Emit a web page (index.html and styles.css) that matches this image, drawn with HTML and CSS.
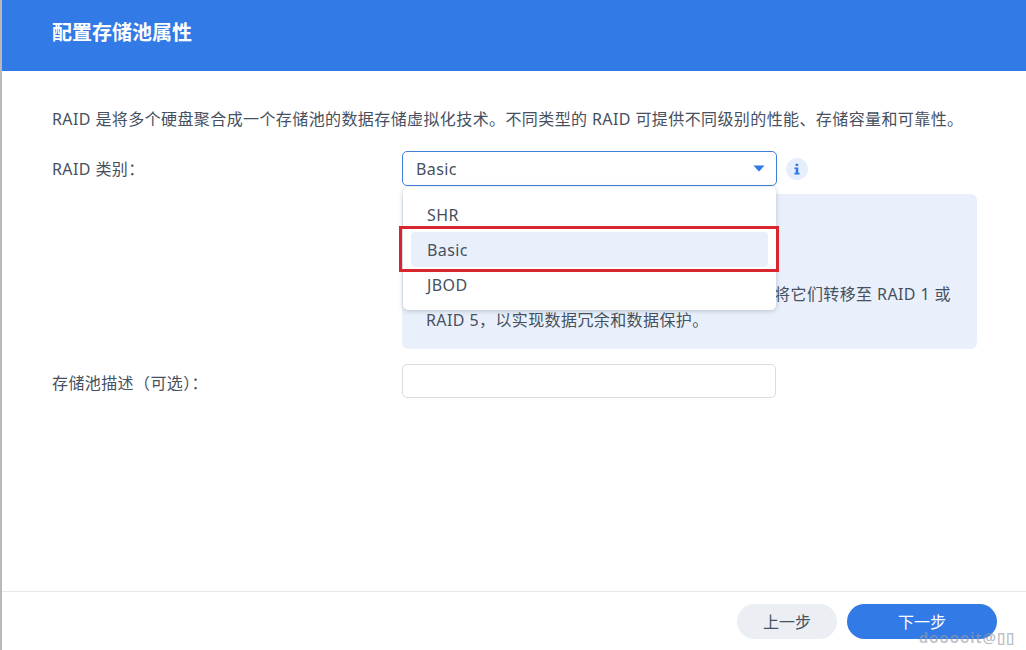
FILE: index.html
```html
<!DOCTYPE html>
<html lang="zh-CN">
<head>
<meta charset="utf-8">
<title>配置存储池属性</title>
<link rel="stylesheet" href="styles.css">
</head>
<body>
<div class="dialog">
  <header class="head"><h1>配置存储池属性</h1></header>
  <main class="content">
    <p class="intro">RAID 是将多个硬盘聚合成一个存储池的数据存储虚拟化技术。不同类型的 RAID 可提供不同级别的性能、存储容量和可靠性。</p>
    <div class="row raid-row">
      <label class="label">RAID 类别：</label>
      <div class="field">
        <div class="select-line">
          <div class="select">
            <span>Basic</span>
            <svg class="caret" width="12" height="7" viewBox="0 0 12 7"><path d="M0.5 0.5h11L6.6 6a.8.8 0 0 1-1.2 0z" fill="#3179e6"/></svg>
          </div>
          <span class="info">
            <svg width="10" height="12" viewBox="0 0 10 12"><path d="M3.6 0.8h2.6v2.2H3.6zM2.4 4.4h3.9v5.4h1.3v1.6H2.4V9.8h1.3V6H2.4z" fill="#3179e6"/></svg>
          </span>
        </div>
        <div class="notice">
          <div class="notice-end">将它们转移至 RAID 1 或</div>
          <div>RAID 5，以实现数据冗余和数据保护。</div>
        </div>
        <ul class="menu">
          <li class="opt">SHR</li>
          <li class="opt active">Basic</li>
          <li class="opt">JBOD</li>
        </ul>
        <div class="mark"></div>
      </div>
    </div>
    <div class="row desc-row">
      <label class="label">存储池描述（可选）：</label>
      <div class="input"></div>
    </div>
  </main>
  <footer class="foot">
    <button class="btn prev">上一步</button>
    <button class="btn next">下一步</button>
    <span class="watermark">dooooit@▯▯</span>
  </footer>
</div>
</body>
</html>
```
FILE: styles.css
```css
* { box-sizing: border-box; }
html, body { margin: 0; height: 100%; }
body {
  background: #fff;
  color: #46505e;
  font-family: "Noto Sans", "Noto Sans CJK SC", sans-serif;
  font-size: 16px;
  letter-spacing: 0.4px;
  overflow: hidden;
}
.dialog {
  height: 650px;
  border-left: 2px solid #b9b9b9;
  display: flex;
  flex-direction: column;
  position: relative;
}
.head {
  height: 71px;
  background: #327ae6;
  padding: 20px 50px 0;
  flex: none;
}
.head h1 {
  margin: 0;
  color: #fff;
  font-size: 20px;
  line-height: 26px;
  letter-spacing: 0;
  font-weight: 700;
}
.content { flex: 1; padding: 36px 49px 0 50px; }
.intro { margin: 0; line-height: 24px; white-space: nowrap; }
.row { display: flex; }
.raid-row { margin-top: 20px; }
.label { width: 350px; flex: none; line-height: 36px; }
.field { position: relative; width: 575px; flex: none; }
.select-line { display: flex; align-items: center; gap: 9px; }
.select {
  width: 375px;
  height: 35px;
  border: 1px solid #3f7fd9;
  border-radius: 5px;
  padding: 0 11px 0 13px;
  display: flex;
  align-items: center;
  justify-content: space-between;
}
.info {
  width: 22px;
  height: 22px;
  border-radius: 50%;
  background: #e6eefb;
  display: flex;
  align-items: center;
  justify-content: center;
}
.notice {
  margin-top: 8px;
  height: 155px;
  background: #e9f0fb;
  border-radius: 6px;
  padding: 87px 26px 0 24px;
  line-height: 26px;
}
.notice-end { text-align: right; }
.menu {
  position: absolute;
  left: 1px;
  top: 36px;
  width: 373px;
  height: 123px;
  margin: 0;
  padding: 10px 8px;
  list-style: none;
  background: #fff;
  border-radius: 5px;
  box-shadow: 0 1px 5px rgba(60, 70, 90, 0.28);
}
.opt { height: 35px; line-height: 37px; padding: 0 16px; }
.opt.active { background: #e9f0fb; border-radius: 4px; }
.mark {
  position: absolute;
  left: -3px;
  top: 75px;
  width: 380px;
  height: 46px;
  border: 3px solid #d9262e;
}
.desc-row { margin-top: 15px; }
.desc-row .label { line-height: 38px; }
.input {
  width: 374px;
  height: 34px;
  border: 1px solid #d8dde4;
  border-radius: 5px;
}
.foot {
  flex: none;
  height: 59px;
  border-top: 1px solid #e6e8eb;
  padding: 12px 29px 0 0;
  display: flex;
  justify-content: flex-end;
  gap: 10px;
  position: relative;
}
.btn {
  height: 35px;
  border: 0;
  border-radius: 18px;
  font: inherit;
  letter-spacing: 0;
  padding: 0 0 2px;
}
.prev { width: 100px; background: #ebeff4; color: #46505e; }
.next { width: 150px; background: #327ae6; color: #fff; }
.watermark {
  position: absolute;
  right: 11px;
  bottom: 3px;
  line-height: 20px;
  font-size: 15px;
  font-weight: 600;
  letter-spacing: 1px;
  color: rgba(150, 155, 165, 0.65);
  pointer-events: none;
}
```
